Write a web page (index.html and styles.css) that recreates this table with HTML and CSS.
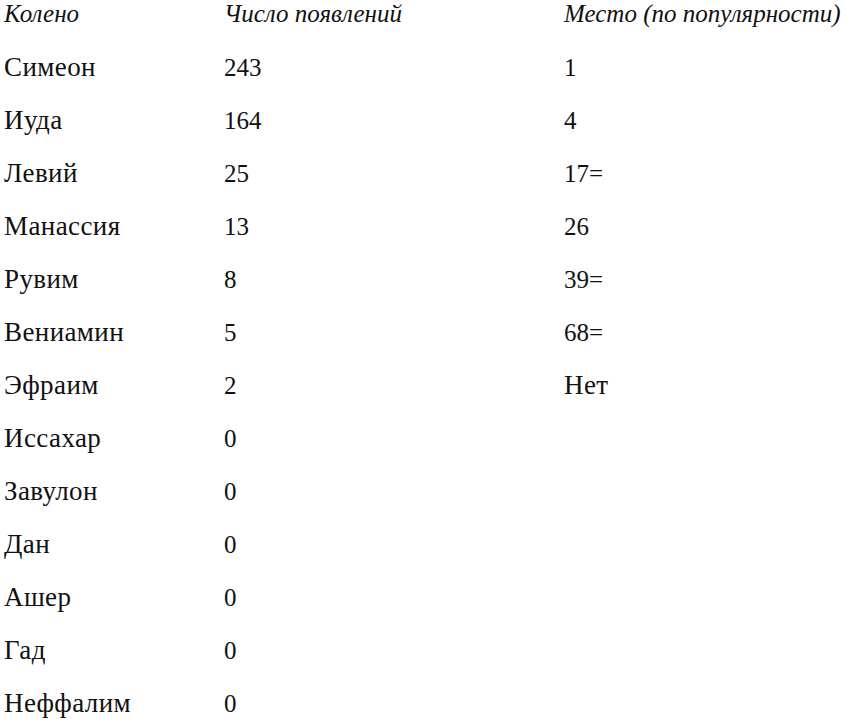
FILE: index.html
```html
<!DOCTYPE html>
<html lang="ru">
<head>
<meta charset="utf-8">
<title>Колена</title>
<link rel="stylesheet" href="styles.css">
</head>
<body>
<div class="table">
  <div class="row head">
    <div class="cell">Колено</div>
    <div class="cell">Число появлений</div>
    <div class="cell">Место (по популярности)</div>
  </div>
  <div class="row"><div class="cell word">Симеон</div><div class="cell">243</div><div class="cell">1</div></div>
  <div class="row"><div class="cell word">Иуда</div><div class="cell">164</div><div class="cell">4</div></div>
  <div class="row"><div class="cell word">Левий</div><div class="cell">25</div><div class="cell">17=</div></div>
  <div class="row"><div class="cell word">Манассия</div><div class="cell">13</div><div class="cell">26</div></div>
  <div class="row"><div class="cell word">Рувим</div><div class="cell">8</div><div class="cell">39=</div></div>
  <div class="row"><div class="cell word">Вениамин</div><div class="cell">5</div><div class="cell">68=</div></div>
  <div class="row"><div class="cell word">Эфраим</div><div class="cell">2</div><div class="cell word">Нет</div></div>
  <div class="row"><div class="cell word">Иссахар</div><div class="cell">0</div><div class="cell"></div></div>
  <div class="row"><div class="cell word">Завулон</div><div class="cell">0</div><div class="cell"></div></div>
  <div class="row"><div class="cell word">Дан</div><div class="cell">0</div><div class="cell"></div></div>
  <div class="row"><div class="cell word">Ашер</div><div class="cell">0</div><div class="cell"></div></div>
  <div class="row"><div class="cell word">Гад</div><div class="cell">0</div><div class="cell"></div></div>
  <div class="row"><div class="cell word">Неффалим</div><div class="cell">0</div><div class="cell"></div></div>
</div>
</body>
</html>
```
FILE: styles.css
```css
html, body {
  margin: 0;
  padding: 0;
  background: #ffffff;
}
body {
  font-family: "Liberation Serif", "DejaVu Serif", serif;
  font-size: 25px;
  color: #111111;
  overflow: hidden;
}
.table {
  padding-left: 4px;
}
.row {
  display: grid;
  grid-template-columns: 220px 340px 1fr;
  height: 53px;
  line-height: 53px;
  white-space: nowrap;
}
.row.head {
  height: 28px;
  line-height: 28px;
  margin-bottom: 13px;
  font-style: italic;
}
.word {
  font-size: 27px;
  letter-spacing: 0.4px;
}
```
